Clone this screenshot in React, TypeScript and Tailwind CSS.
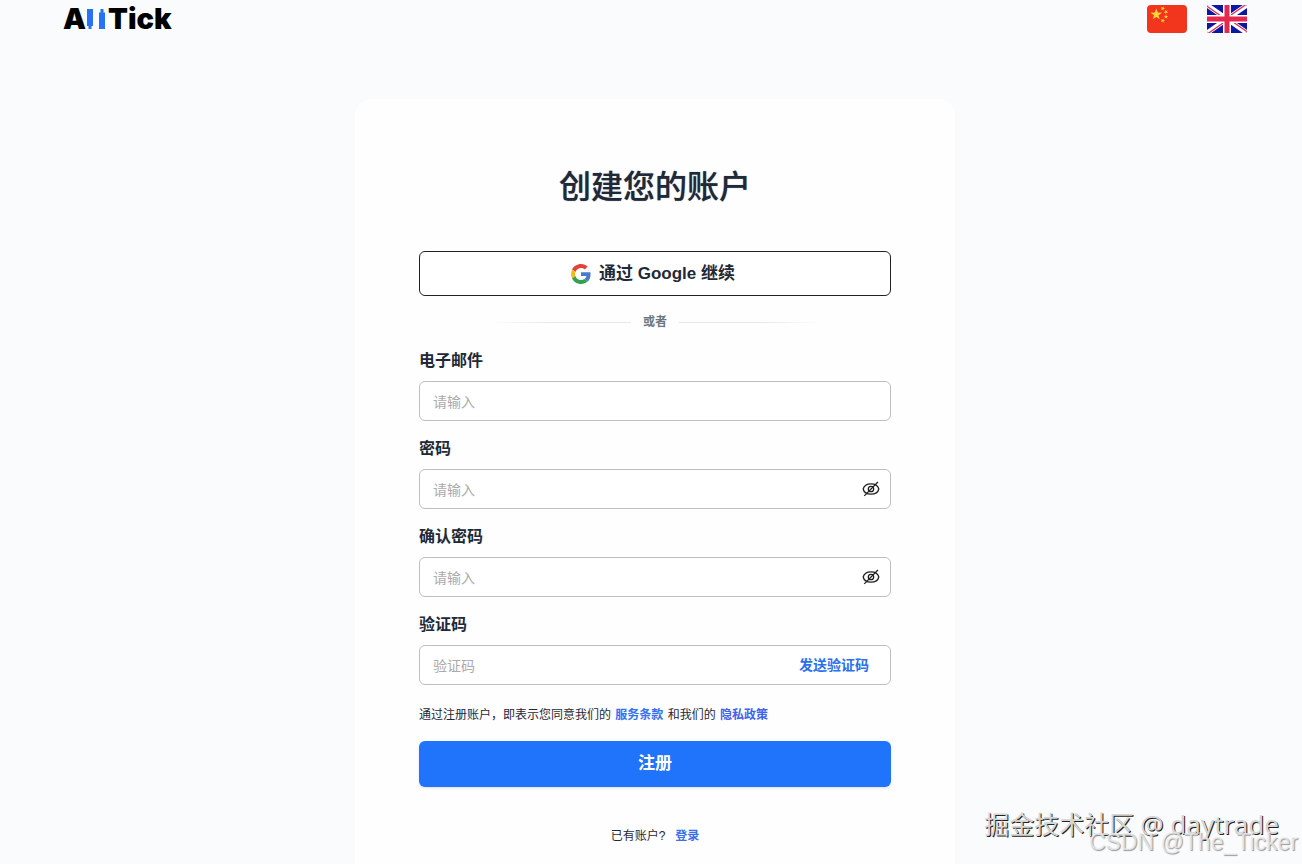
import { useState } from "react";
import type { InputHTMLAttributes, ReactNode } from "react";

function Logo() {
  return (
    <a
      href="/"
      aria-label="AllTick"
      className="flex items-center font-['Inter',sans-serif] text-[29px] leading-9 font-black text-black"
    >
      <span>A</span>
      <svg viewBox="0 0 22 24" className="h-6 w-[22px]" fill="#2672f8" aria-hidden="true">
        <path d="M1 2h6v17H5.500v3h-3v-3H1z" />
        <path d="M13 5.500h1.500V2h3v3.500H19V22h-6z" />
      </svg>
      <span>Tick</span>
    </a>
  );
}

const SMALL_STARS = [
  { x: 15.7, y: 3.4, r: 20 },
  { x: 19, y: 7, r: 45 },
  { x: 19, y: 11.7, r: 0 },
  { x: 15.7, y: 15.7, r: 20 },
];

function ChinaFlag() {
  const star = "M0-5 1.200-1.600 4.800-1.500 1.900.6 2.900 4 0 2-2.900 4-1.900.6-4.800-1.500-1.200-1.600z";
  return (
    <svg viewBox="0 0 40 28" className="h-7 w-10" aria-hidden="true">
      <rect width="40" height="28" rx="4" fill="#f1361d" />
      <g fill="#ffd335">
        <path d={star} transform="translate(9.300 9.500) scale(1.200)" />
        {SMALL_STARS.map((s) => (
          <path
            key={s.y}
            d={star}
            transform={`translate(${s.x} ${s.y}) rotate(${s.r}) scale(.48)`}
          />
        ))}
      </g>
    </svg>
  );
}

function UkFlag() {
  return (
    <svg viewBox="0 0 40 28" className="h-7 w-10" aria-hidden="true">
      <clipPath id="uk-frame">
        <rect width="40" height="28" rx="2" />
      </clipPath>
      <g clipPath="url(#uk-frame)">
        <rect width="40" height="28" fill="#0b17a7" />
        <path d="M0 0 40 28M40 0 0 28" stroke="#fff" strokeWidth="4.800" />
        <path d="M-1 .5 20 15.200M41 27.500 20 12.800M39-.5 20 12.800M1 28.500 20 15.200" stroke="#e0304f" strokeWidth="1.300" />
        <path d="M20 0v28M0 14h40" stroke="#fff" strokeWidth="8" />
        <path d="M20 0v28M0 14h40" stroke="#e5284d" strokeWidth="5" />
      </g>
    </svg>
  );
}

function GoogleIcon() {
  return (
    <svg viewBox="0 0 48 48" className="size-5" aria-hidden="true">
      <path fill="#e04437" d="M24 9.500c3.540 0 6.710 1.220 9.210 3.600l6.850-6.850C35.900 2.380 30.470 0 24 0 14.620 0 6.510 5.380 2.560 13.220l7.980 6.190C12.430 13.720 17.740 9.500 24 9.500z" />
      <path fill="#4b7cc9" d="M46.980 24.550c0-1.570-.15-3.090-.38-4.550H24v9.020h12.940c-.58 2.960-2.260 5.480-4.780 7.180l7.730 6c4.510-4.180 7.090-10.360 7.090-17.650z" />
      <path fill="#f5bd1c" d="M10.530 28.590c-.48-1.450-.76-2.990-.76-4.590s.27-3.140.76-4.590l-7.980-6.190C.92 16.460 0 20.120 0 24c0 3.880.92 7.540 2.560 10.780l7.970-6.190z" />
      <path fill="#34a050" d="M24 48c6.480 0 11.930-2.130 15.890-5.810l-7.730-6c-2.150 1.450-4.920 2.300-8.160 2.300-6.260 0-11.570-4.220-13.470-9.910l-7.980 6.190C6.510 42.620 14.620 48 24 48z" />
    </svg>
  );
}

function EyeOffIcon() {
  return (
    <svg viewBox="0 0 18 18" className="size-[18px]" fill="none" stroke="#222" strokeWidth="1.300" aria-hidden="true">
      <path d="M1.200 9C1.900 5.800 5.200 3.800 9 3.800s7.100 2 7.800 5.200c-.7 3.200-4 5.200-7.800 5.200S1.900 12.200 1.200 9z" />
      <circle cx="9" cy="9" r="2.700" />
      <path d="M2.300 15.900 15.900 2" />
    </svg>
  );
}

interface FieldProps extends InputHTMLAttributes<HTMLInputElement> {
  id: string;
  label: string;
  children?: ReactNode;
}

function Field({ id, label, children, ...rest }: FieldProps) {
  return (
    <div className="flex flex-col gap-2">
      <label htmlFor={id} className="text-base leading-6 font-bold">
        {label}
      </label>
      <div className="flex h-10 items-center rounded-md border border-[#bfbfbf] bg-white">
        <input
          id={id}
          className="h-full min-w-0 flex-1 bg-transparent px-[13px] pt-0.5 text-sm outline-none placeholder:text-[#aaa]"
          {...rest}
        />
        {children}
      </div>
    </div>
  );
}

function PasswordField({ id, label }: { id: string; label: string }) {
  const [visible, setVisible] = useState(false);

  return (
    <Field id={id} label={label} type={visible ? "text" : "password"} placeholder="请输入">
      <button
        type="button"
        aria-label="显示密码"
        aria-pressed={visible}
        onClick={() => setVisible(!visible)}
        className="mr-2.5"
      >
        <EyeOffIcon />
      </button>
    </Field>
  );
}

export default function App() {
  return (
    <div className="relative flex min-h-screen flex-col bg-[#f9fbfd] font-['Liberation_Sans','Noto_Sans_CJK_SC',sans-serif] text-[#1f2937]">
      <header className="flex h-[38px] items-center justify-between pr-[55px] pl-[63px]">
        <Logo />
        <div className="flex gap-5">
          <button type="button" aria-label="中文">
            <ChinaFlag />
          </button>
          <button type="button" aria-label="English">
            <UkFlag />
          </button>
        </div>
      </header>

      <main className="flex flex-1 flex-col items-center pt-[61px] pl-2">
        <div className="w-full max-w-[600px] flex-1 rounded-t-2xl bg-[#fefefe] px-16 pt-16">
          <h1 className="text-center text-[32px] leading-12 font-medium [text-shadow:0_0_1px_#1f293799]">
            创建您的账户
          </h1>

          <button
            type="button"
            className="mt-10 flex h-[45px] w-full items-center justify-center gap-2 rounded-md border border-[#222] bg-white pr-1 text-[17px] font-bold"
          >
            <GoogleIcon />
            通过 Google 继续
          </button>

          <div className="mx-auto mt-[17px] flex w-[330px] max-w-full items-center gap-3 text-xs leading-[18px] font-bold text-[#6b7780]">
            <span className="h-px flex-1 bg-linear-to-r from-transparent to-[#e6e9eb] to-40%" />
            或者
            <span className="h-px flex-1 bg-linear-to-l from-transparent to-[#e6e9eb] to-40%" />
          </div>

          <form className="mt-[18px] flex flex-col gap-4" onSubmit={(e) => e.preventDefault()}>
            <Field id="email" label="电子邮件" type="email" placeholder="请输入" />
            <PasswordField id="password" label="密码" />
            <PasswordField id="confirm" label="确认密码" />
            <Field id="code" label="验证码" type="text" placeholder="验证码">
              <button type="button" className="mr-[21px] text-sm font-bold text-[#2b6fec]">
                发送验证码
              </button>
            </Field>

            <p className="mt-1 text-xs leading-5">
              通过注册账户，即表示您同意我们的{" "}
              <a href="#terms" className="mx-px font-bold text-[#3370f2]">
                服务条款
              </a>{" "}
              和我们的{" "}
              <a href="#privacy" className="mx-px font-bold text-[#4361ee]">
                隐私政策
              </a>
            </p>

            <button
              type="submit"
              className="h-[46px] rounded-md bg-[#2073fb] text-[17px] font-bold text-white shadow-sm"
            >
              注册
            </button>
          </form>

          <p className="mt-10 flex justify-center gap-2.5 text-xs leading-[18px]">
            已有账户?
            <a href="#login" className="font-bold text-[#3a70ee]">
              登录
            </a>
          </p>
        </div>
      </main>

      <div className="pointer-events-none absolute right-1 bottom-1.5 flex flex-col items-end whitespace-nowrap">
        <span className="mr-[19px] flex gap-1.5 font-['Noto_Sans','Noto_Sans_CJK_SC',sans-serif] text-[25px] leading-9 text-[#d6d6d6] [text-shadow:1px_1px_0_#222]">
          <span>掘金技术社区</span>
          <span className="text-[26px]">@ daytrade</span>
        </span>
        <span className="-mt-4 text-[23px] leading-8 text-[#ededee]/80 [text-shadow:1px_1px_1px_#999]">
          CSDN @The_Ticker
        </span>
      </div>
    </div>
  );
}
